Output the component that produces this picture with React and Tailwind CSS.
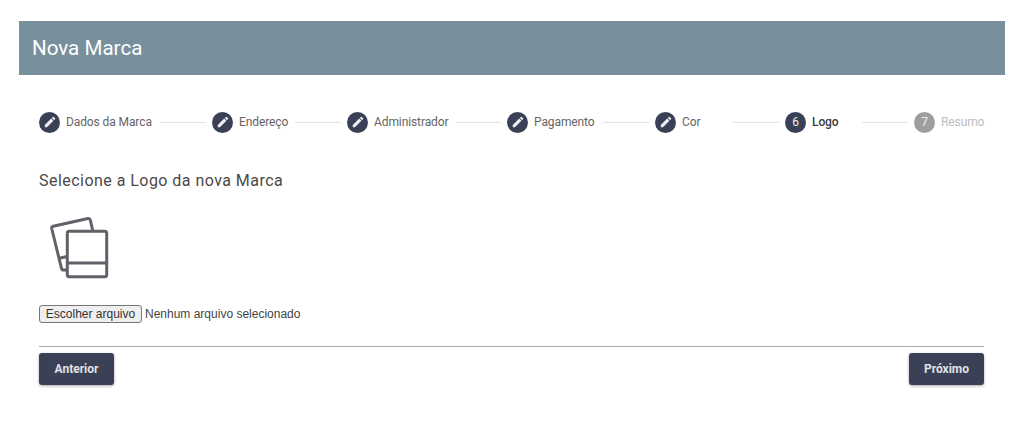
import React from "react";

const Pencil = () => (
  <svg viewBox="0 0 24 24" className="w-[14px] h-[14px]" fill="#eef0f3">
    <path d="M3 17.25V21h3.75L17.81 9.94l-3.75-3.75L3 17.25zM20.71 7.04a1 1 0 0 0 0-1.41l-2.34-2.34a1 1 0 0 0-1.41 0l-1.83 1.83 3.75 3.75 1.83-1.83z" />
  </svg>
);

const steps = [
  { label: "Dados da Marca", done: true, w: "w-[88px]" },
  { label: "Endereço", done: true, w: "w-[50px]" },
  { label: "Administrador", done: true, w: "w-[75px]" },
  { label: "Pagamento", done: true, w: "w-[63px]" },
  { label: "Cor", done: true, w: "w-[45px]" },
  { label: "Logo", n: 6, active: true, w: "w-[44px]" },
  { label: "Resumo", n: 7, w: "w-[43px]" },
];

function Step({ s }) {
  const on = s.done || s.active;
  return (
    <div className="flex items-center shrink-0">
      <div className={`w-[21px] h-[21px] rounded-full flex items-center justify-center text-[#eef0f3] text-[12px] ${on ? "bg-[#3a4056]" : "bg-[#9e9e9e]"}`}>
        {s.done ? <Pencil /> : s.n}
      </div>
      <span
        className={`ml-[6px] text-[12px] tracking-[-0.1px] whitespace-nowrap leading-[16px] ${s.w} ${s.active ? "font-medium text-[#3c3c3c]" : s.done ? "text-[#666666]" : "text-[#bdbdbd]"}`}
      >
        {s.label}
      </span>
    </div>
  );
}

export default function App() {
  return (
    <div className="h-[422px] bg-white pt-[21px] px-[19px] font-['Roboto',sans-serif]">
      <div className="w-[986px]">
        <div className="h-[54px] bg-[#78909c] flex items-center px-[13px] text-white text-[20.6px]">
          Nova Marca
        </div>
        <div className="pl-[20px] pr-[21px]">
          <div className="flex items-center mt-[36px] h-[22px]">
            {steps.map((s, i) => (
              <React.Fragment key={s.label}>
                <Step s={s} />
                {i < steps.length - 1 && <div className="flex-1 h-px bg-[#e4e4e4] mx-[6px]" />}
              </React.Fragment>
            ))}
          </div>
          <h2 className="mt-[36px] text-[16px] leading-[24px] tracking-[0.46px] text-[#4a4a4a]">
            Selecione a Logo da nova Marca
          </h2>
          <div className="mt-[19px] ml-[6px] h-[72px]">
            <svg width="68" height="72" viewBox="45 212 68 72" fill="none" stroke="#5f6368" strokeWidth="3" strokeLinejoin="round" strokeLinecap="round">
              <path d="M66 270h-2.500a2 2 0 0 1-2-1.600L51.700 228.500a2 2 0 0 1 1.500-2.300L88 218.500a2 2 0 0 1 2.300 1.500l2.200 9.500" />
              <path d="M60.500 258l5.500-1.300" />
              <rect x="67.300" y="231.300" width="39.400" height="45.400" rx="2" />
              <path d="M67.300 263h39.400" />
            </svg>
          </div>
          <div className="mt-[21px] flex items-center h-[18px] font-['Liberation_Sans',sans-serif] text-[12px] text-[#444444]">
            <button className="w-[103px] h-[18px] bg-[#efefef] border border-[#767676] rounded-[3px] text-[#333333] text-[12px] leading-none">
              Escolher arquivo
            </button>
            <span className="ml-[3px]">Nenhum arquivo selecionado</span>
          </div>
          <div className="mt-[23px] h-px bg-[#aaaaaa]" />
          <div className="mt-[6px] flex justify-between">
            <button className="w-[75px] h-[32px] rounded-[3px] bg-[#3a4056] text-[#e0e1e5] text-[12px] font-bold shadow-[0_1px_3px_rgba(0,0,0,0.35)]">
              Anterior
            </button>
            <button className="w-[75px] h-[32px] rounded-[3px] bg-[#3a4056] text-[#e0e1e5] text-[12px] font-bold shadow-[0_1px_3px_rgba(0,0,0,0.35)]">
              Próximo
            </button>
          </div>
        </div>
      </div>
    </div>
  );
}
